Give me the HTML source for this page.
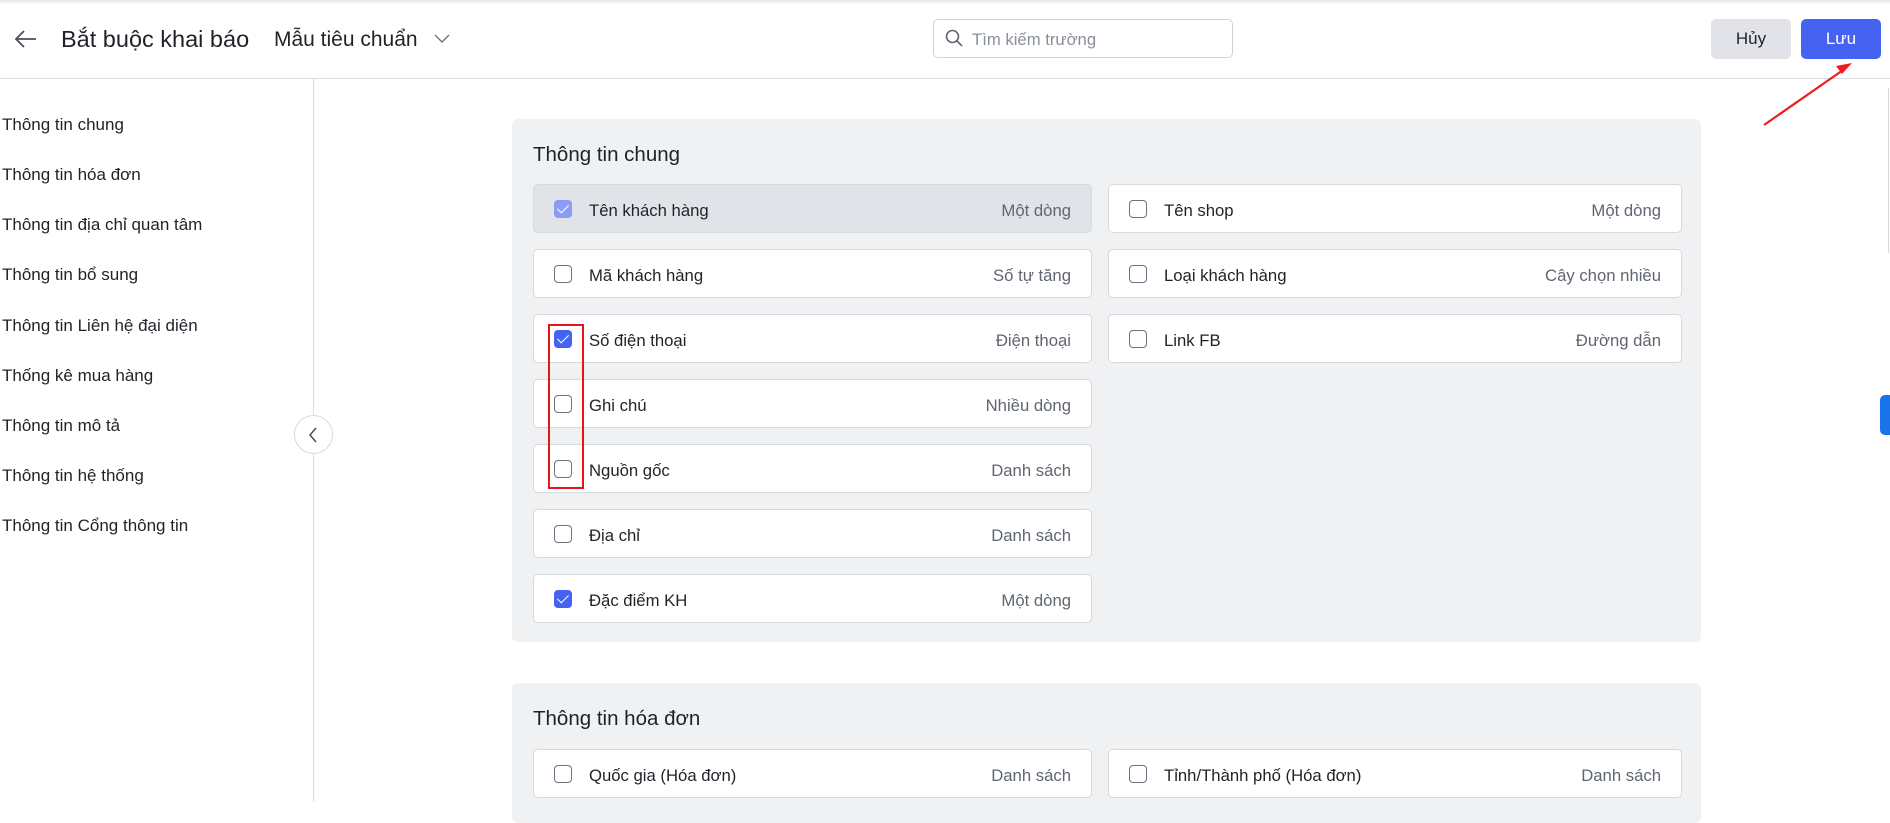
<!DOCTYPE html>
<html><head><meta charset="utf-8"><style>
*{box-sizing:border-box;margin:0;padding:0}
body{width:1890px;height:802px;overflow:hidden;background:#fff;font-family:"Liberation Sans",sans-serif;color:#1f2328;position:relative}
.abs{position:absolute}
.topsh{left:0;top:0;width:1890px;height:5px;background:linear-gradient(#e4e6ea,#fff)}
.hdr{left:0;top:78px;width:1890px;height:1px;background:#d9dce1}
.side{left:313px;top:79px;width:1px;height:723px;background:#d9dce1}
.nav{left:2px;font-size:17px;color:#1f2328}
.card{background:#f0f1f3;border-radius:6px}
.row{position:absolute;height:49px;background:#fff;border:1px solid #d6d9de;border-radius:5px;font-size:16.7px}
.row .cb{position:absolute;left:20px;top:15px;width:18px;height:18px;border:1.5px solid #6b7280;border-radius:4px;background:#fff}
.row .cb.on{background:#4563f0;border-color:#4563f0}
.row .cb.dis{background:#8b9cf4;border-color:#8b9cf4}
.row .cb.on:after,.row .cb.dis:after{content:"";position:absolute;left:5px;top:1px;width:5px;height:10px;border:solid #fff;border-width:0 1.5px 1.5px 0;transform:rotate(45deg)}
.row .l{position:absolute;left:55px;top:16px;color:#1f2328}
.row .t{position:absolute;right:20px;top:16px;color:#5f6670}
.row.gray{background:#e2e3e8}
.ttl{font-size:20.5px;color:#1f2328}
</style></head><body>
<div class="abs topsh"></div>
<svg class="abs" style="left:14px;top:29px" width="24" height="20" viewBox="0 0 24 20"><path d="M22 10H3M10 2L2 10l8 8" stroke="#4b5058" stroke-width="1.8" fill="none"/></svg>
<div class="abs" style="left:61px;top:26px;font-size:23.5px;color:#1f2328">Bắt buộc khai báo</div>
<div class="abs" style="left:274px;top:28px;font-size:21px;color:#1f2328">Mẫu tiêu chuẩn</div>
<svg class="abs" style="left:434px;top:34px" width="16" height="10" viewBox="0 0 16 10"><path d="M1 1l7 7 7-7" stroke="#6b7280" stroke-width="1.4" fill="none"/></svg>
<div class="abs" style="left:933px;top:19px;width:300px;height:39px;border:1px solid #cfd3d9;border-radius:5px"></div>
<svg class="abs" style="left:945px;top:29px" width="18" height="18" viewBox="0 0 18 18"><circle cx="7.5" cy="7.5" r="6" stroke="#5f6670" stroke-width="1.6" fill="none"/><path d="M12 12l5 5" stroke="#5f6670" stroke-width="1.6"/></svg>
<div class="abs" style="left:972px;top:30px;font-size:16.7px;color:#8a9099">Tìm kiếm trường</div>
<div class="abs" style="left:1711px;top:19px;width:80px;height:40px;background:#e2e3e8;border-radius:5px;font-size:17px;text-align:center;line-height:40px;color:#1f2328">Hủy</div>
<div class="abs" style="left:1801px;top:19px;width:80px;height:40px;background:#4563f0;border-radius:5px;font-size:17px;text-align:center;line-height:40px;color:#fff">Lưu</div>
<div class="abs hdr"></div>
<div class="abs side"></div>
<div class="abs nav" style="top:115px">Thông tin chung</div>
<div class="abs nav" style="top:165px">Thông tin hóa đơn</div>
<div class="abs nav" style="top:215px">Thông tin địa chỉ quan tâm</div>
<div class="abs nav" style="top:265px">Thông tin bổ sung</div>
<div class="abs nav" style="top:316px">Thông tin Liên hệ đại diện</div>
<div class="abs nav" style="top:366px">Thống kê mua hàng</div>
<div class="abs nav" style="top:416px">Thông tin mô tả</div>
<div class="abs nav" style="top:466px">Thông tin hệ thống</div>
<div class="abs nav" style="top:516px">Thông tin Cổng thông tin</div>
<div class="abs" style="left:294px;top:415px;width:39px;height:39px;border:1px solid #d6d9de;border-radius:50%;background:#fff"></div>
<svg class="abs" style="left:307px;top:426px" width="12" height="18" viewBox="0 0 12 18"><path d="M9 2L3 9l6 7" stroke="#4b5058" stroke-width="1.5" fill="none"/></svg>

<div class="abs card" style="left:512px;top:119px;width:1189px;height:523px">
<div class="abs ttl" style="left:21px;top:24px">Thông tin chung</div>
</div>
<div class="row gray" style="left:533px;top:184px;width:559px"><div class="cb dis"></div><div class="l">Tên khách hàng</div><div class="t">Một dòng</div></div>
<div class="row" style="left:533px;top:249px;width:559px"><div class="cb"></div><div class="l">Mã khách hàng</div><div class="t">Số tự tăng</div></div>
<div class="row" style="left:533px;top:314px;width:559px"><div class="cb on"></div><div class="l">Số điện thoại</div><div class="t">Điện thoại</div></div>
<div class="row" style="left:533px;top:379px;width:559px"><div class="cb"></div><div class="l">Ghi chú</div><div class="t">Nhiều dòng</div></div>
<div class="row" style="left:533px;top:444px;width:559px"><div class="cb"></div><div class="l">Nguồn gốc</div><div class="t">Danh sách</div></div>
<div class="row" style="left:533px;top:509px;width:559px"><div class="cb"></div><div class="l">Địa chỉ</div><div class="t">Danh sách</div></div>
<div class="row" style="left:533px;top:574px;width:559px"><div class="cb on"></div><div class="l">Đặc điểm KH</div><div class="t">Một dòng</div></div>
<div class="row" style="left:1108px;top:184px;width:574px"><div class="cb"></div><div class="l">Tên shop</div><div class="t">Một dòng</div></div>
<div class="row" style="left:1108px;top:249px;width:574px"><div class="cb"></div><div class="l">Loại khách hàng</div><div class="t">Cây chọn nhiều</div></div>
<div class="row" style="left:1108px;top:314px;width:574px"><div class="cb"></div><div class="l">Link FB</div><div class="t">Đường dẫn</div></div>
<div class="abs" style="left:548px;top:324px;width:36px;height:165px;border:2.5px solid #e8141b"></div>

<div class="abs card" style="left:512px;top:683px;width:1189px;height:140px">
<div class="abs ttl" style="left:21px;top:24px">Thông tin hóa đơn</div>
</div>
<div class="row" style="left:533px;top:749px;width:559px"><div class="cb"></div><div class="l">Quốc gia (Hóa đơn)</div><div class="t">Danh sách</div></div>
<div class="row" style="left:1108px;top:749px;width:574px"><div class="cb"></div><div class="l">Tỉnh/Thành phố (Hóa đơn)</div><div class="t">Danh sách</div></div>

<svg class="abs" style="left:0;top:0" width="1890" height="802"><path d="M1764 125L1846 68" stroke="#ee1c1c" stroke-width="2.2"/><path d="M1852 63l-16 3 6 8z" fill="#ee1c1c"/></svg>
<div class="abs" style="left:1880px;top:395px;width:14px;height:40px;background:#1a73e8;border-radius:5px 0 0 5px"></div>
<div class="abs" style="left:1888px;top:88px;width:1px;height:165px;background:#d6d9de"></div>
</body></html>
